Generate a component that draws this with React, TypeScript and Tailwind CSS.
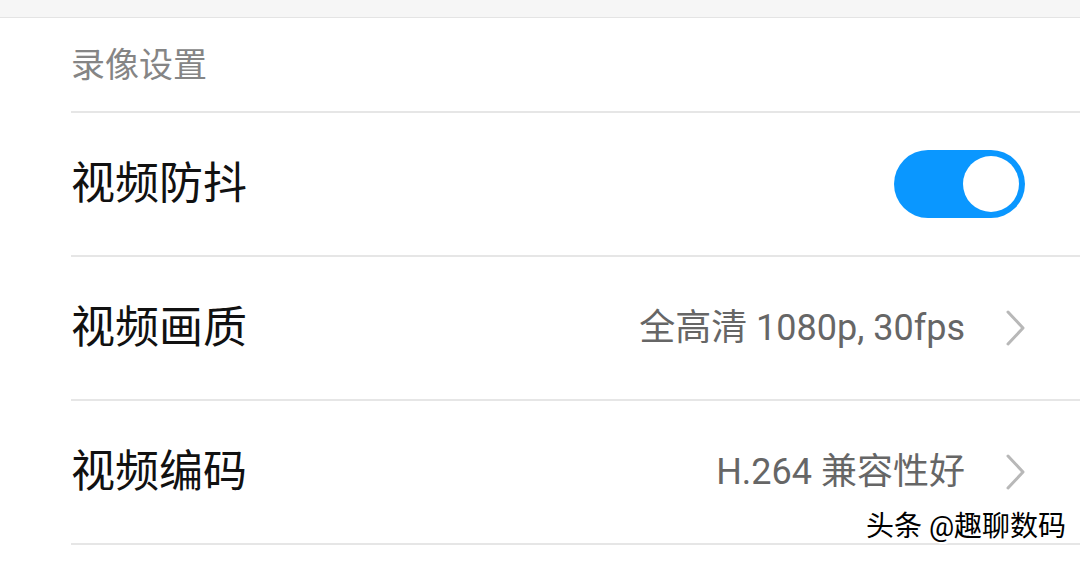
import React from "react";

const FONT = { fontFamily: 'Roboto, "Noto Sans CJK SC", "Noto Sans", sans-serif' };

function Chevron() {
  return (
    <svg width="22" height="36" viewBox="0 0 22 36" className="ml-[40px] mr-[53px]">
      <path d="M3 2 L18 18 L3 34" fill="none" stroke="#b8b8b8" strokeWidth="3" strokeLinecap="round" strokeLinejoin="round" />
    </svg>
  );
}

function Row({ label, children }: { label: string; children?: React.ReactNode }) {
  return (
    <div className="h-[144px] flex items-center justify-between border-b-2 border-[#e6e6e6]">
      <span className="text-[44px] text-[#111] leading-none">{label}</span>
      <div className="flex items-center">{children}</div>
    </div>
  );
}

export default function App() {
  return (
    <div className="w-[1080px] h-[561px] bg-white overflow-hidden relative" style={FONT}>
      <div className="h-[18px] bg-[#f6f6f6] border-b border-[#e4e4e4]" />
      <div className="pl-[71px]">
        <div className="h-[95px] flex items-center border-b-2 border-[#e6e6e6]">
          <span className="text-[34px] text-[#858585] leading-none">录像设置</span>
        </div>
        <Row label="视频防抖">
          <div className="w-[131px] h-[68px] rounded-full bg-[#0a97ff] flex items-center justify-end pr-[6px] mr-[55px]">
            <div className="w-[56px] h-[56px] rounded-full bg-white" />
          </div>
        </Row>
        <Row label="视频画质">
          <span className="text-[36px] text-[#666] leading-none">全高清 1080p, 30fps</span>
          <Chevron />
        </Row>
        <Row label="视频编码">
          <span className="text-[36px] text-[#666] leading-none">H.264 兼容性好</span>
          <Chevron />
        </Row>
      </div>
      <div
        className="absolute left-[866px] top-[513px] text-[28px] leading-none text-black"
        style={{ textShadow: "1px 1px 0 #fff, -1px -1px 0 #fff, 1px -1px 0 #fff, -1px 1px 0 #fff, 2px 2px 1px #fff" }}
      >
        头条 @趣聊数码
      </div>
    </div>
  );
}
